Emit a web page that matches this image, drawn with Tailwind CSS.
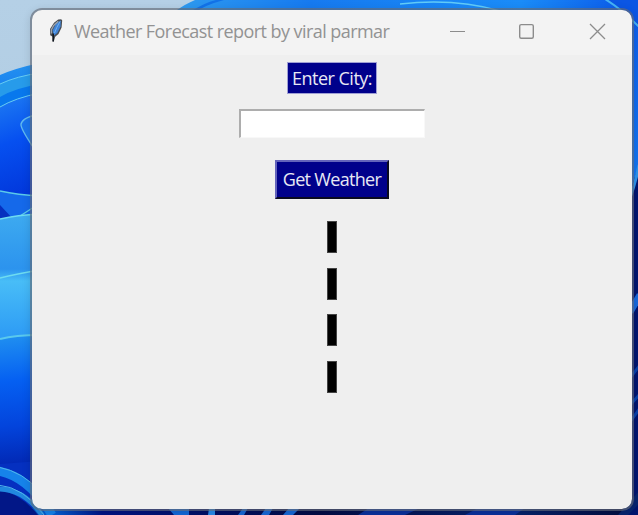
<!DOCTYPE html>
<html lang="en">
<head>
<meta charset="utf-8">
<title>Weather Forecast report by viral parmar</title>
<script src="https://cdn.jsdelivr.net/npm/@tailwindcss/browser@4"></script>
</head>
<body class="w-[638px] h-[515px] overflow-hidden font-['Open_Sans','Noto_Sans',sans-serif]">
<div class="relative w-[638px] h-[515px] overflow-hidden pl-8 pt-2.5">
  <!-- desktop wallpaper -->
  <svg class="absolute inset-0" width="638" height="515" viewBox="0 0 638 515" fill="none">
    <defs>
      <linearGradient id="sky" x1="0" y1="0" x2="0" y2="1"><stop stop-color="#b5d0e6"/><stop offset="1" stop-color="#a9c6dc"/></linearGradient>
      <linearGradient id="top" x1="170" y1="0" x2="638" y2="0" gradientUnits="userSpaceOnUse"><stop stop-color="#2f9cf0"/><stop offset=".3" stop-color="#167af0"/><stop offset=".75" stop-color="#1a8cf8"/><stop offset="1" stop-color="#0a55e8"/></linearGradient>
      <linearGradient id="l1" x1="0" y1="65" x2="0" y2="100" gradientUnits="userSpaceOnUse"><stop stop-color="#2391f0"/><stop offset="1" stop-color="#1478ee"/></linearGradient>
      <linearGradient id="l2" x1="0" y1="100" x2="32" y2="190" gradientUnits="userSpaceOnUse"><stop stop-color="#1c78f2"/><stop offset=".45" stop-color="#0650f0"/><stop offset="1" stop-color="#0238dc"/></linearGradient>
      <linearGradient id="l3" x1="0" y1="215" x2="0" y2="335" gradientUnits="userSpaceOnUse"><stop stop-color="#3daaf0"/><stop offset=".45" stop-color="#2c93ee"/><stop offset=".55" stop-color="#48bdf7"/><stop offset="1" stop-color="#2e9cf5"/></linearGradient>
      <linearGradient id="l4" x1="0" y1="336" x2="12" y2="465" gradientUnits="userSpaceOnUse"><stop stop-color="#2090f0"/><stop offset=".35" stop-color="#0560f2"/><stop offset=".7" stop-color="#0344dc"/><stop offset="1" stop-color="#0228b4"/></linearGradient>
      <linearGradient id="r1" x1="0" y1="0" x2="0" y2="190" gradientUnits="userSpaceOnUse"><stop stop-color="#0d5ceb"/><stop offset="1" stop-color="#1376f0"/></linearGradient>
      <linearGradient id="bt" x1="0" y1="0" x2="638" y2="0" gradientUnits="userSpaceOnUse"><stop stop-color="#021a86"/><stop offset=".08" stop-color="#0763d8"/><stop offset=".16" stop-color="#001385"/><stop offset=".5" stop-color="#020b45"/><stop offset=".8" stop-color="#06236e"/><stop offset="1" stop-color="#020a3c"/></linearGradient>
    </defs>
    <rect width="638" height="515" fill="url(#sky)"/>
    <path d="M174 12Q187 3 195 0H638V12Z" fill="url(#top)"/>
    <path d="M190 12Q206 2 216 0H224Q205 5 196 12Z" fill="#1272e8"/>
    <path d="M400 4Q455-2 500 11" stroke="#62cbf8" stroke-width="1.5"/>
    <!-- left edge petals -->
    <path d="M0 75Q16 68 40 63V110H0Z" fill="url(#l1)"/>
    <path d="M0 84Q17 76 40 73V94Q14 98 0 107Z" fill="#279bea"/>
    <path d="M0 97Q15 88 40 84V94Q14 98 0 108Z" fill="#0878ed"/>
    <path d="M0 107Q15 98 40 93V200H0Z" fill="url(#l2)"/>
    <path d="M0 84Q17 76 40 73M0 107Q15 98 40 93" stroke="#68cdf3"/>
    <path d="M40 114Q23 117 21 124Q20 129 40 157Z" fill="#1973ee" stroke="#60b9ed" stroke-width="1.5"/>
    <path d="M0 191Q18 195 40 196V222H0Z" fill="#1569ea"/>
    <path d="M0 205L13 219H0Z" fill="#0630bf"/>
    <path d="M0 191Q18 195 40 196M20 216L34 207" stroke="#5bcae9" stroke-width="1.4"/>
    <path d="M0 219Q17 215 40 214V340H0Z" fill="url(#l3)"/>
    <path d="M0 219Q17 215 40 214M0 278Q16 274 40 270" stroke="#6edcf0" stroke-width="1.4"/>
    <path d="M0 339Q15 335 40 335V515H0Z" fill="url(#l4)"/>
    <path d="M0 339Q15 335 40 335" stroke="#5ac9ed" stroke-width="2"/>
    <path d="M0 464L40 461V515H0Z" fill="#0530c0"/>
    <!-- bottom edge -->
    <rect x="30" y="508" width="608" height="7" fill="url(#bt)"/>
    <path d="M0 490Q20 493 38 515H0Z" fill="#021787"/>
    <path d="M-2 471Q28 476 52 515" stroke="#1683ea" stroke-width="9"/>
    <path d="M-2 489Q24 489 42 515" stroke="#2188df" stroke-width="5"/>
    <path d="M-2 467Q24 472 40 492M-2 485Q24 487 44 515" stroke="#50b5eb"/>
    <path d="M168 508H189V515H174Z" fill="#1268d8"/>
    <path d="M209 508H215V515H208Z" fill="#2a8ae8"/>
    <path d="M243 508H248L244 515H238ZM266 508H273L269 515H261ZM289 508H300L293 515H283Z" fill="#1768d6"/>
    <path d="M369 508H420L405 515H358ZM478 508H525L515 515H465Z" fill="#0a319c"/>
    <!-- right edge -->
    <path d="M628 0H638V200H628Z" fill="url(#r1)"/>
    <path d="M606 0Q625 10 638 28V0Z" fill="#0b56e4"/>
    <path d="M600-4Q621 8 640 28" stroke="#45b3f4" stroke-width="2"/>
    <path d="M628 199L638 167V515H628Z" fill="#01156f"/>
    <path d="M630 198Q636 181 639 165" stroke="#2d92ed" stroke-width="3"/>
    <path d="M630 312L640 295" stroke="#1768dc" stroke-width="7"/>
    <path d="M630 378L640 365M630 405L640 394M630 422L640 408" stroke="#0840a9" stroke-width="3"/>
    <path d="M618 515L640 490V503L628 515Z" fill="#07246f"/>
  </svg>

  <main class="relative w-[600px] h-[499px] rounded-[10px] overflow-hidden bg-[#efefef] flex flex-col">
    <header class="h-[45px] shrink-0 bg-[#f3f3f3] flex items-center">
      <svg class="ml-4 shrink-0 -mt-1" width="17" height="25" viewBox="0 0 17 25" fill="none">
        <path d="M13.2 1.2L14.2 2.6L13.6 9.5L10.5 16L7.2 18.8L5.8 23.5H4.7V18.8L2.2 17.2L2 11L6 4.8L10.2 1.4Z" fill="#4a4e54"/>
        <path d="M12.8 2.5L12.6 8.5L9.3 15L5.6 17.8L4.6 12.5L8 5.5Z" fill="#3f84d8"/>
        <path d="M10.3 3.2L5.7 7.5L3.3 12L3.5 15.5" stroke="#9ba3ad" stroke-width="1.3"/>
        <path d="M12 3.5L8.8 9.5L6.5 15" stroke="#74b2f0"/>
        <path d="M5.2 15.5V23.5" stroke="#111820" stroke-width="1.6"/>
      </svg>
      <h1 class="ml-[9px] -mt-1 w-[330px] shrink-0 whitespace-nowrap text-[18px] leading-6 tracking-[-0.56px] text-[#929292]">Weather Forecast report by viral parmar</h1>
      <svg class="ml-[13px] -mt-[3px] shrink-0" width="160" height="18" viewBox="0 0 160 18" fill="none" stroke="#8c8c8c" stroke-width="1.2">
        <path d="M33 9.5H48"/>
        <rect x="102.7" y="2.6" width="13.6" height="13.6" rx="1.5" stroke-width="1.4"/>
      </svg>
      <svg class="ml-[12px] -mt-[3px] shrink-0" width="18" height="18" viewBox="0 0 18 18" fill="none" stroke="#8c8c8c" stroke-width="1.3"><path d="M1 2L16 17M16 2L1 17"/></svg>
    </header>
    <section class="flex flex-col items-center pt-[7px]">
      <label for="city" class="w-[90px] h-8 bg-[#00008b] text-[#e8e8f4] border border-[#9f9fd4] flex items-center justify-center whitespace-nowrap text-[18px] leading-6 tracking-[-0.5px]">Enter City:</label>
      <input id="city" type="text" class="mt-[15px] w-[186px] h-[29px] bg-white border-t-2 border-l-2 border-t-[#adadad] border-l-[#adadad] border-r border-b border-r-[#f8f8f8] border-b-[#f8f8f8] outline-none">
      <button class="mt-[22px] w-[114px] h-[39px] bg-[#00008b] text-[#e8e8f4] border-t-2 border-l-2 border-r-2 border-b-2 border-t-[#6464bb] border-l-[#6464bb] border-r-[#090920] border-b-[#090920] flex items-center justify-center whitespace-nowrap text-[18px] leading-6 tracking-[-0.68px] pb-0.5">Get Weather</button>
      <div class="mt-[22px] flex flex-col gap-[14.5px]">
        <div class="w-[10px] h-8 bg-black border border-[#444444]"></div>
        <div class="w-[10px] h-8 bg-black border border-[#444444]"></div>
        <div class="w-[10px] h-8 bg-black border border-[#444444]"></div>
        <div class="w-[10px] h-8 bg-black border border-[#444444]"></div>
      </div>
    </section>
  </main>
  <div class="absolute left-[30px] top-2 w-[604px] h-[503px] rounded-xl border-2 border-[#626975]/65 shadow-[0_2px_8px_rgba(0,0,0,0.12)] pointer-events-none"></div>
</div>
</body>
</html>
